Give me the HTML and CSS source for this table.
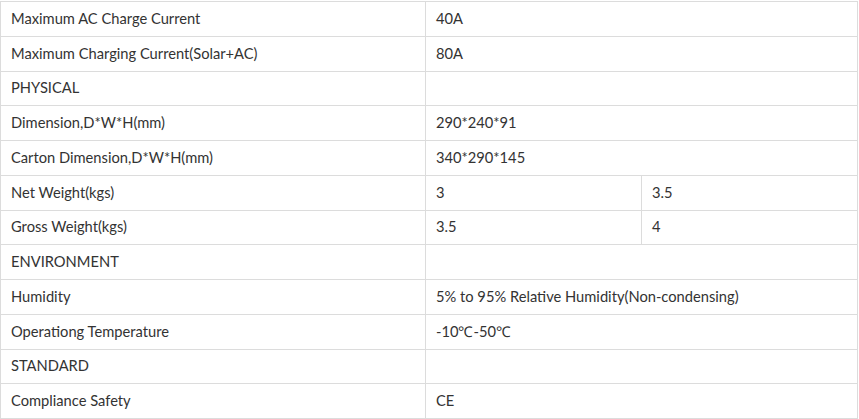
FILE: index.html
```html
<!DOCTYPE html>
<html>
<head>
<meta charset="utf-8">
<link rel="stylesheet" href="styles.css">
</head>
<body>
<table class="spec">
<colgroup><col class="c1"><col class="c2"><col class="c3"></colgroup>
<tbody>
<tr><td>Maximum AC Charge Current</td><td colspan="2">40A</td></tr>
<tr><td>Maximum Charging Current(Solar+AC)</td><td colspan="2">80A</td></tr>
<tr><td>PHYSICAL</td><td colspan="2"></td></tr>
<tr><td>Dimension,D*W*H(mm)</td><td colspan="2">290*240*91</td></tr>
<tr><td>Carton Dimension,D*W*H(mm)</td><td colspan="2">340*290*145</td></tr>
<tr><td>Net Weight(kgs)</td><td>3</td><td>3.5</td></tr>
<tr><td>Gross Weight(kgs)</td><td>3.5</td><td>4</td></tr>
<tr><td>ENVIRONMENT</td><td colspan="2"></td></tr>
<tr><td>Humidity</td><td colspan="2">5% to 95% Relative Humidity(Non-condensing)</td></tr>
<tr><td>Operationg Temperature</td><td colspan="2">-10℃-50℃</td></tr>
<tr><td>STANDARD</td><td colspan="2"></td></tr>
<tr><td>Compliance Safety</td><td colspan="2">CE</td></tr>
</tbody>
</table>
</body>
</html>
```
FILE: styles.css
```css
html, body { margin: 0; padding: 0; background: #fff; }
body { padding-top: 1px; }
.spec {
  border-collapse: collapse;
  width: 857px;
  table-layout: fixed;
  font-family: Lato, "Liberation Sans", sans-serif;
  font-size: 14.7px;
  color: #333;
}
.c1 { width: 425px; }
.c2 { width: 216px; }
.c3 { width: 216px; }
.spec td {
  border: 1px solid #dcdcdc;
  height: 33.75px;
  padding: 0 10px 2px;
  vertical-align: middle;
  box-sizing: border-box;
}
.spec tr { height: 34.75px; }
```
